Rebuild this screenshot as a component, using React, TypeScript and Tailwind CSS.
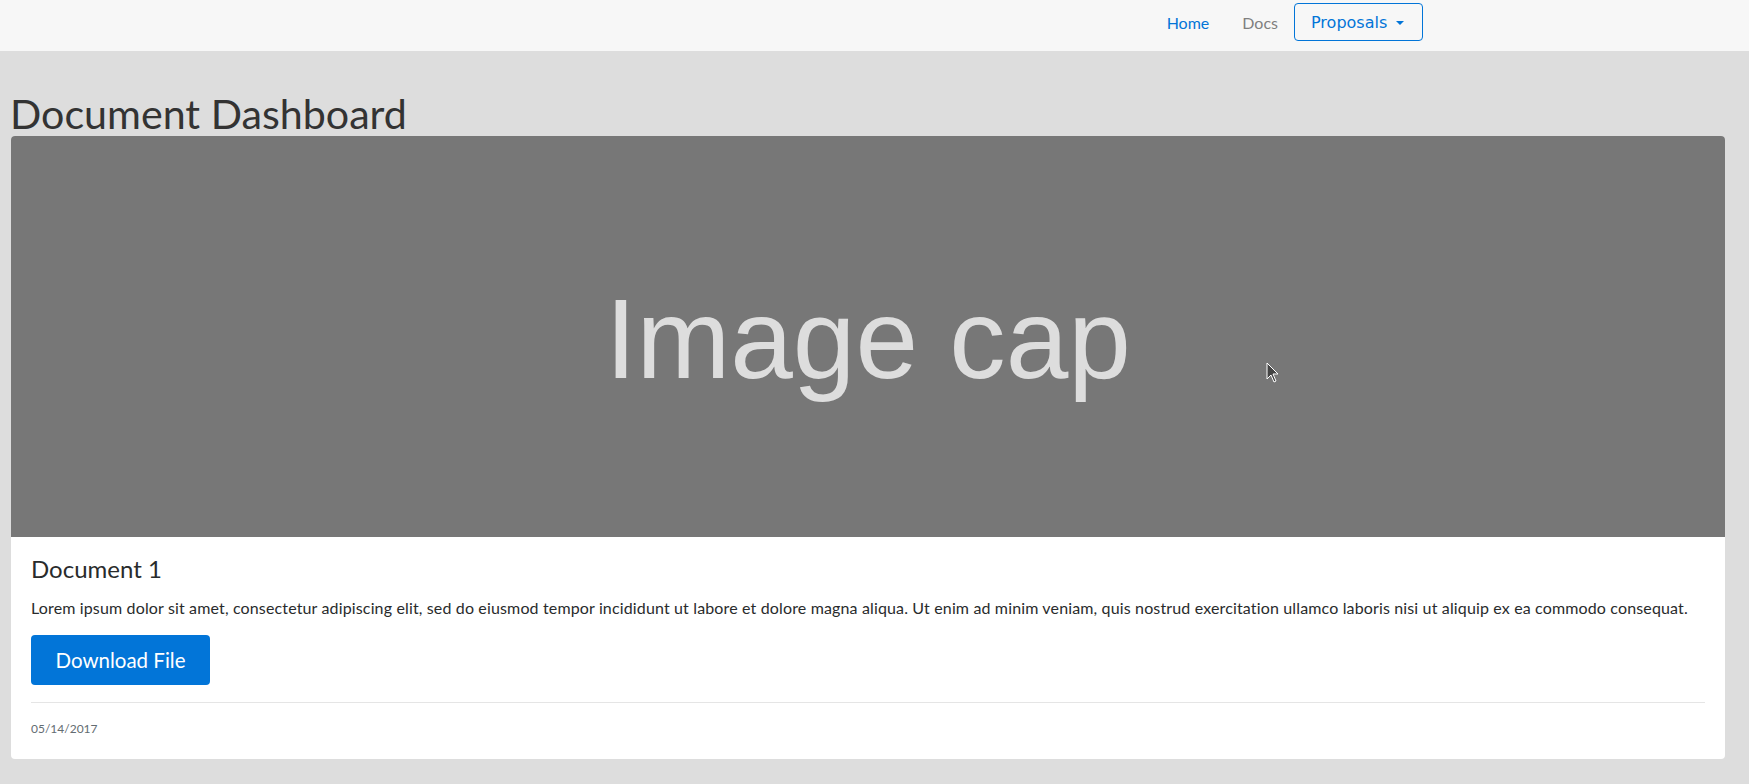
import React from "react";

const font = { fontFamily: "Lato, 'Noto Sans', sans-serif" };

export default function App() {
  return (
    <div className="relative min-h-[784px] w-full bg-[#dddddd] text-[#292b2c]" style={font}>
      <nav className="h-[51px] bg-[#f7f7f7] flex items-start justify-end pr-[326px]">
        <div className="flex items-center h-[38px] mt-[3px] text-[16px]">
          <a className="text-[#0275d8] mr-[33px] pt-[1px]">Home</a>
          <a className="text-[#7f7f7f] mr-[16px] pt-[1px]">Docs</a>
          <button
            className="w-[129px] h-[38px] border border-[#0275d8] rounded-[4px] pl-[16px] pt-[1px] flex items-center text-[#0275d8] text-[16px]"
            style={{ fontFamily: "'DejaVu Sans', sans-serif" }}
          >
            <span>Proposals</span>
            <span className="ml-[9px] w-0 h-0 border-l-[4.5px] border-r-[4.5px] border-t-[4.5px] border-l-transparent border-r-transparent border-t-[#0275d8]"></span>
          </button>
        </div>
      </nav>
      <main className="pt-[40px] pb-[24px]">
        <h1 className="ml-[10px] mb-[1px] text-[41.2px] leading-[44px] text-[#333333] font-normal">
          Document Dashboard
        </h1>
        <div className="ml-[11px] w-[1714px] bg-white rounded-[4px] overflow-hidden">
          <div
            className="h-[401px] bg-[#777777] flex items-center justify-center pt-[6px] text-[#dddddd] text-[112.6px] leading-none"
            style={{ fontFamily: "'Liberation Sans', Arial, sans-serif" }}
          >
            Image cap
          </div>
          <div className="pt-[17px] px-[20px] pb-[19px]">
            <h4 className="text-[24px] leading-[29px] mb-[13px] font-normal text-[#292b2c]">Document 1</h4>
            <p className="text-[16px] leading-[24px] mb-[15px] whitespace-nowrap tracking-[0.145px]">
              Lorem ipsum dolor sit amet, consectetur adipiscing elit, sed do eiusmod tempor incididunt ut labore et dolore magna aliqua. Ut enim ad minim veniam, quis nostrud exercitation ullamco laboris nisi ut aliquip ex ea commodo consequat.
            </p>
            <a className="w-[179px] h-[50px] bg-[#0275d8] text-white text-[20.5px] rounded-[4px] flex items-center justify-center">
              Download File
            </a>
            <div className="mt-[17px] mb-[15px] h-px bg-[#e5e5e5]"></div>
            <p className="text-[12px] leading-[22px] text-[#636c72]">05/14/2017</p>
          </div>
        </div>
      </main>
      <svg className="absolute left-[1266px] top-[362px]" width="14" height="22" viewBox="0 0 14 22">
        <path d="M1 1 L1 17 L5 13 L8 20 L10 19 L7 12 L12 12 Z" fill="#444" stroke="#fff" strokeWidth="1" />
      </svg>
    </div>
  );
}
